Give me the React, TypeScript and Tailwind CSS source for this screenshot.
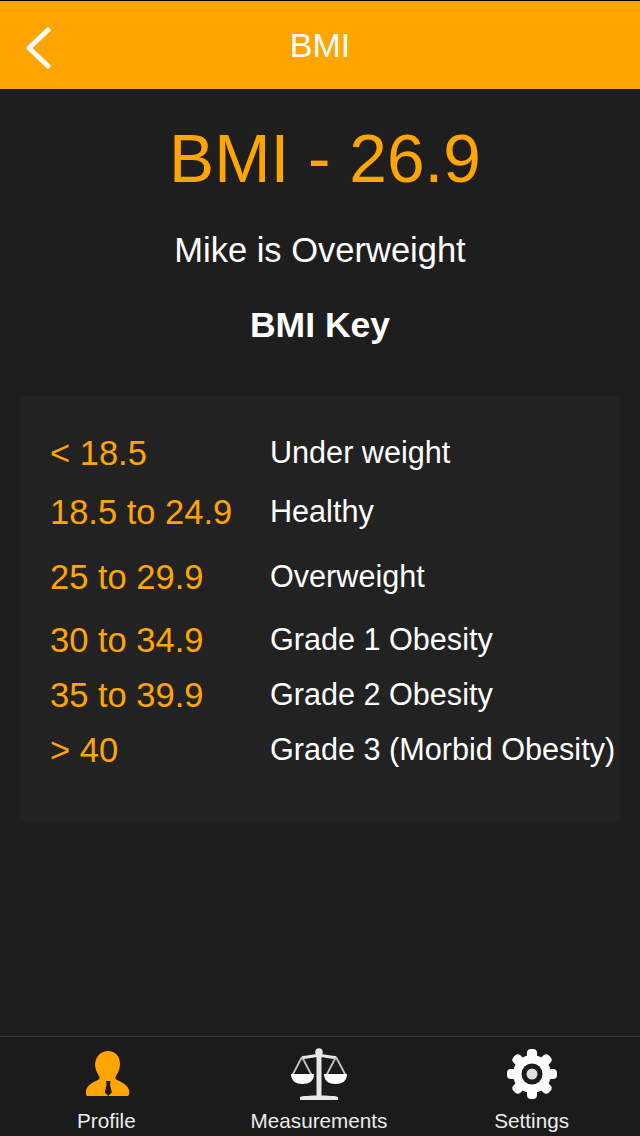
const sans = "font-['Liberation_Sans',Arial,sans-serif]";

const rows = [
  { range: "< 18.5", label: "Under weight", height: "h-[59px]" },
  { range: "18.5 to 24.9", label: "Healthy", height: "h-[59px]" },
  { range: "25 to 29.9", label: "Overweight", height: "h-[71px]" },
  { range: "30 to 34.9", label: "Grade 1 Obesity", height: "h-[55px]" },
  { range: "35 to 39.9", label: "Grade 2 Obesity", height: "h-[55px]" },
  { range: "> 40", label: "Grade 3 (Morbid Obesity)", height: "h-[55px]" },
];

function BackIcon() {
  return (
    <svg viewBox="0 0 26 42" className="absolute left-[25px] top-[26px] h-[42px] w-[26px]" fill="none">
      <path d="M23 3 4 21l19 18" stroke="#ffffff" strokeWidth="5" strokeLinecap="round" strokeLinejoin="round" />
    </svg>
  );
}

function ProfileIcon() {
  return (
    <svg viewBox="0 0 44 46" className="ml-[3px] h-[46px] w-[44px]">
      <path
        fill="#ffa500"
        d="M22 0c7 0 12 5 12 13 0 5-2 9-4 12-1 2-.5 3 1 4 4 2 10 4 12 10 .5 2 .5 5-1 6H1c-1.500-1-1.500-4-1-6 2-6 8-8 12-10 1.500-1 2-2 1-4-2-3-4-7-4-12C10 5 15 0 22 0Z"
      />
      <path fill="#1b1b1b" d="M20 30h4.500l-.5 3.500 1.800 8-3.500 3.500-3.500-3.500 1.800-8Z" />
    </svg>
  );
}

function ScaleIcon() {
  return (
    <svg viewBox="0 0 56 52" className="h-[52px] w-[56px]" fill="none">
      <circle cx="28" cy="4" r="3.800" fill="#e8e8e8" />
      <path d="M28 4v44" stroke="#e8e8e8" strokeWidth="5" />
      <path d="M11 9.500c6 0 11-2 17-2s11 2 17 2" stroke="#e8e8e8" strokeWidth="3" />
      <path d="M11 9 1.500 27M11 9l9.500 18M45 9l-9.500 18M45 9l9.500 18" stroke="#c4c4c4" strokeWidth="1.800" />
      <path d="M0 26h23c0 7-5 10-11.500 10S0 33 0 26ZM33 26h23c0 7-5 10-11.500 10S33 33 33 26Z" fill="#ffffff" />
      <path d="M9 49c3-2 35-2 38 0v3H9Z" fill="#e8e8e8" />
    </svg>
  );
}

function GearIcon() {
  return (
    <svg viewBox="0 0 50 50" className="h-[50px] w-[50px]">
      <circle cx="25" cy="25" r="19" fill="#ffffff" />
      {[0, 45, 90, 135, 180, 225, 270, 315].map((angle) => (
        <rect key={angle} x="20" y="0" width="10" height="14" rx="4" fill="#ffffff" transform={`rotate(${angle} 25 25)`} />
      ))}
      <circle cx="25" cy="25" r="10.500" fill="#1b1b1b" />
      <circle cx="25" cy="25" r="5.500" fill="#e0e0e0" />
    </svg>
  );
}

function TabItem({ label, icon }: { label: string; icon: React.ReactNode }) {
  return (
    <div className="flex flex-1 flex-col items-center">
      <div className="flex h-[72px] items-center justify-center pt-[2px]">{icon}</div>
      <span className="text-[20.700px] leading-[24px] text-[#ececec]">{label}</span>
    </div>
  );
}

export default function App() {
  return (
    <div className={`${sans} flex h-[1136px] w-[640px] flex-col overflow-hidden bg-[#1e1e1e]`}>
      <div className="h-[1px] bg-black" />
      <header className="relative flex h-[88px] items-center justify-center bg-[#ffa500] text-[34px] text-white">
        <BackIcon />
        BMI
      </header>

      <main className="flex flex-1 flex-col items-center">
        <h1 className="mt-[28px] pl-[10px] text-[67.600px] leading-[84px] text-[#ffa500]">BMI - 26.9</h1>
        <p className="mt-[29px] text-[34.500px] leading-[40px] text-white">Mike is Overweight</p>
        <h2 className="mt-[35px] text-[35.500px] font-bold leading-[40px] text-white">BMI Key</h2>

        <section className="mt-[51px] h-[426px] w-[600px] bg-[#222222] pl-[30px] pt-[28px]">
          {rows.map((row) => (
            <div key={row.range} className={`flex items-center ${row.height}`}>
              <span className="w-[220px] shrink-0 text-[34.500px] leading-none text-[#ffa500]">{row.range}</span>
              <span className="whitespace-nowrap pb-[2px] text-[30.600px] leading-none text-white">{row.label}</span>
            </div>
          ))}
        </section>
      </main>

      <nav className="flex h-[100px] border-t border-[#3a3a3a] bg-[#1b1b1b] pr-[2px]">
        <TabItem label="Profile" icon={<ProfileIcon />} />
        <TabItem label="Measurements" icon={<ScaleIcon />} />
        <TabItem label="Settings" icon={<GearIcon />} />
      </nav>
    </div>
  );
}
